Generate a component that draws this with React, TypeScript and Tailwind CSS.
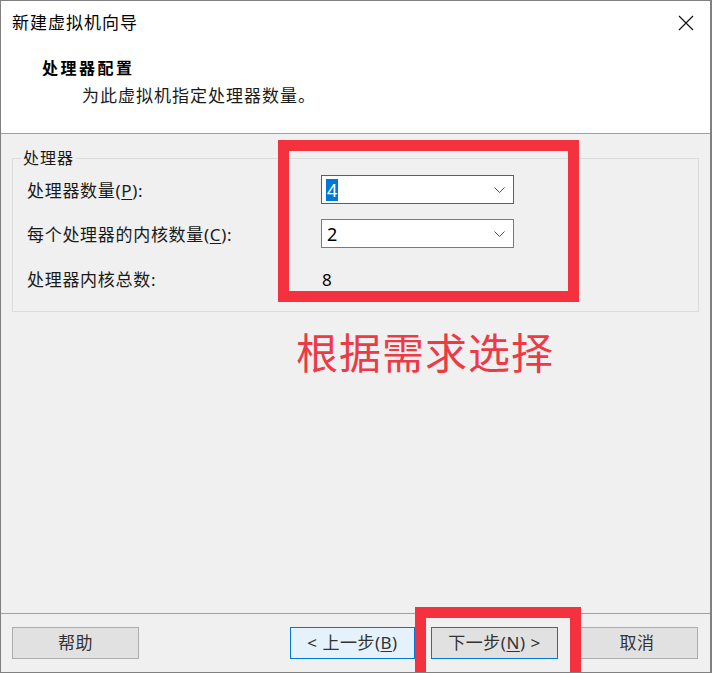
import React from 'react';

const font = { fontFamily: '"Noto Sans", "Noto Sans CJK SC", sans-serif' };

function Chevron() {
  return (
    <svg width="11" height="6" viewBox="0 0 11 6" className="absolute right-[8px] top-1/2 -translate-y-1/2">
      <path d="M0.5 0.5 L5.5 5.5 L10.5 0.5" fill="none" stroke="#505050" strokeWidth="1" />
    </svg>
  );
}

function Combo({ value, active }: { value: string; active?: boolean }) {
  return (
    <div
      className={`relative h-[29px] w-[193px] bg-white border flex items-center pl-[4px] ${
        active ? 'border-[#0078d7]' : 'border-[#7a7a7a]'
      }`}
    >
      {active ? (
        <span className="bg-[#0078d7] text-white text-[18px] leading-[22px] px-[1px]">{value}</span>
      ) : (
        <span className="text-black text-[18px] leading-[22px] px-[1px]">{value}</span>
      )}
      <Chevron />
    </div>
  );
}

function Button({ children, className }: { children: React.ReactNode; className: string }) {
  return (
    <button className={`h-[32px] border text-[17px] text-[#333] tracking-[0.5px] flex items-center justify-center ${className}`}>
      {children}
    </button>
  );
}

export default function App() {
  return (
    <div style={font} className="relative w-[712px] h-[673px] overflow-hidden border border-[#808080] border-r-2 flex flex-col bg-white text-[#1a1a1a]">
      {/* title bar */}
      <div className="h-[43px] flex items-center justify-between pl-[11px] pr-[16px]">
        <span className="text-[17px] tracking-[1px] text-black">新建虚拟机向导</span>
        <svg width="16" height="16" viewBox="0 0 16 16">
          <path d="M1 1 L15 15 M15 1 L1 15" stroke="#111" strokeWidth="1.2" />
        </svg>
      </div>

      {/* header */}
      <div className="h-[90px] border-b border-[#a0a0a0] pt-[13px]">
        <div className="pl-[41px] text-[16px] leading-[22px] font-bold tracking-[2.5px] text-black">处理器配置</div>
        <div className="pl-[81px] mt-[6px] text-[17px] leading-[22px] tracking-[1px]">为此虚拟机指定处理器数量。</div>
      </div>

      {/* body */}
      <div className="flex-1 bg-[#f0f0f0] pt-[13px] px-[11px]">
        <fieldset className="border border-[#dcdcdc] pl-[14px] pb-[20px]">
          <legend className="ml-[-6px] px-[2px] text-[16px] leading-[22px] tracking-[1px]">处理器</legend>
          <div className="grid grid-cols-[294px_1fr] items-center gap-y-[15px] pt-[6px]">
            <div className="text-[17px] tracking-[0.7px] pt-[3px]">
              处理器数量(<span className="underline underline-offset-2">P</span>):
            </div>
            <Combo value="4" active />
            <div className="text-[17px] tracking-[0.7px] pt-[3px]">
              每个处理器的内核数量(<span className="underline underline-offset-2">C</span>):
            </div>
            <Combo value="2" />
            <div className="text-[17px] tracking-[0.7px] leading-[22px] mt-[6px]">处理器内核总数:</div>
            <div className="text-[17px] leading-[22px] text-black pl-[1px] mt-[6px]">8</div>
          </div>
        </fieldset>
      </div>

      {/* footer */}
      <div className="h-[59px] border-t border-[#a0a0a0] bg-[#f0f0f0] flex items-start pt-[13px] pl-[11px]">
        <Button className="w-[127px] bg-[#e1e1e1] border-[#adadad]">帮助</Button>
        <Button className="w-[125px] ml-[151px] bg-[#e5f1fb] border-[#0078d7]">
          &lt; 上一步(<span className="underline underline-offset-2">B</span>)
        </Button>
        <Button className="w-[127px] ml-[16px] bg-[#e1e1e1] border-[#0078d7]">
          下一步(<span className="underline underline-offset-2">N</span>) &gt;
        </Button>
        <Button className="w-[122px] ml-[18px] bg-[#e1e1e1] border-[#adadad]">取消</Button>
      </div>

      {/* annotations */}
      <div className="absolute left-[277px] top-[139px] w-[301px] h-[162px] border-[11px] border-[#f4323f]" />
      <div className="absolute left-[414px] top-[606px] w-[166px] h-[90px] border-[11px] border-[#f4323f]" />
      <div className="absolute left-[295px] top-[331px] text-[42px] leading-[42px] tracking-[1px] text-[#ec3a46]">
        根据需求选择
      </div>
    </div>
  );
}
